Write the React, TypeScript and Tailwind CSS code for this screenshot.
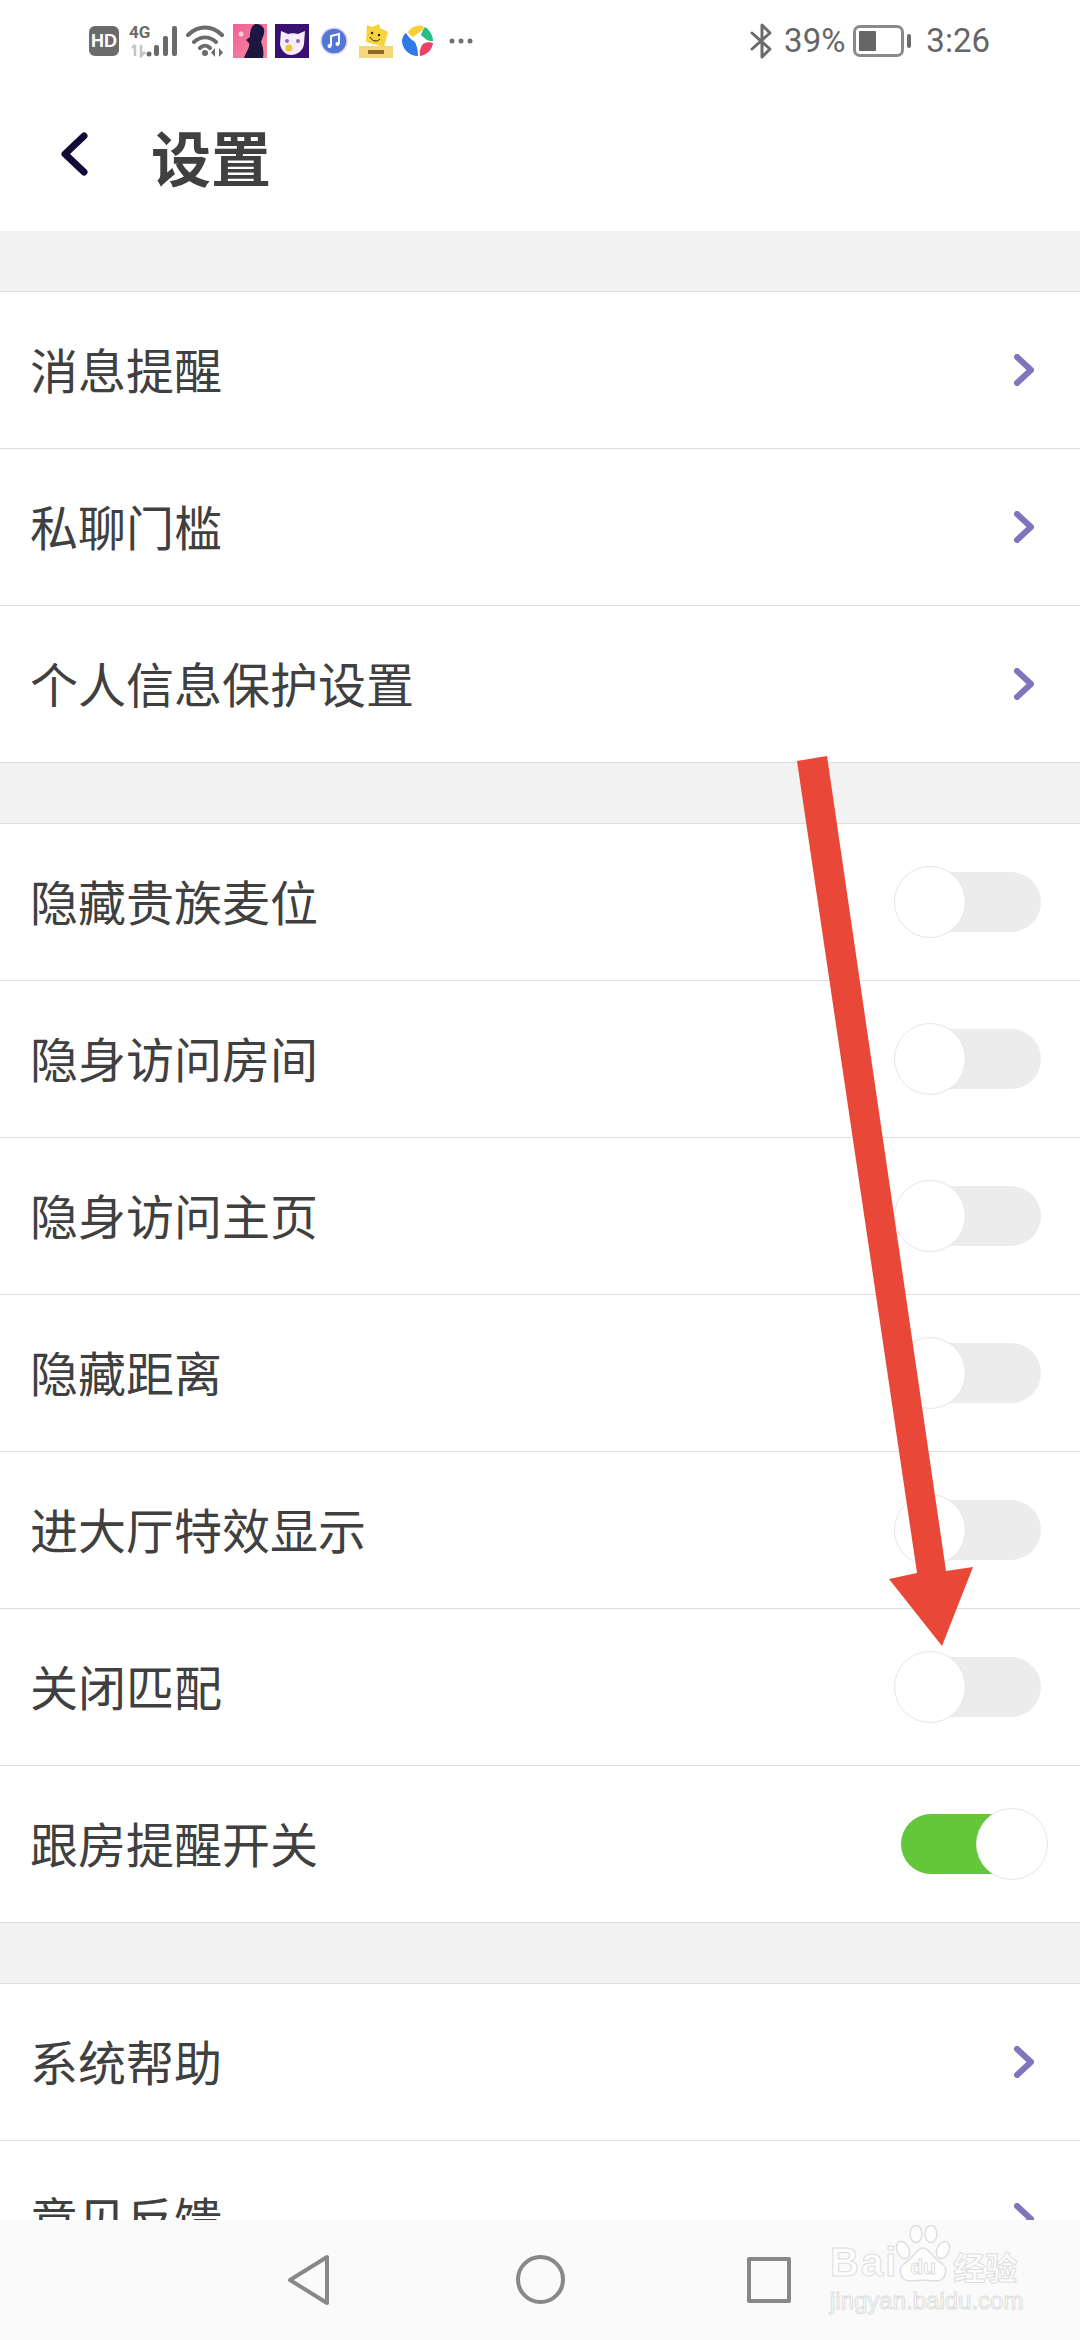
const FONT = "font-['Noto_Sans_CJK_SC','Noto_Sans',sans-serif]";

const Chevron = () => (
  <svg width="24" height="32" viewBox="0 0 24 32" className="mr-[4px]">
    <path d="M4 3 L18 16 L4 29" fill="none" stroke="#8273bd" strokeWidth="6" strokeLinecap="round" strokeLinejoin="round" />
  </svg>
);

const Toggle = ({ on = false }: { on?: boolean }) => (
  <div className={`relative w-[140px] h-[60px] rounded-full ${on ? 'bg-[#63c739]' : 'bg-[#ececec]'}`}>
    <div
      className={`absolute top-[-6px] w-[72px] h-[72px] rounded-full bg-white border border-[#e6e6e6] ${
        on ? 'right-[-7px]' : 'left-[-7px]'
      }`}
    />
  </div>
);

const Row = ({ label, toggle, on }: { label: string; toggle?: boolean; on?: boolean }) => (
  <div className="h-[157px] shrink-0 flex items-center justify-between bg-white border-b border-[#dedede] pl-[30px] pr-[39px]">
    <span className="text-[48px] leading-none pb-[4px] text-[#404040]">{label}</span>
    {toggle ? <Toggle on={on} /> : <Chevron />}
  </div>
);

const Gap = () => <div className="h-[61px] shrink-0 bg-[#f2f2f2] border-b border-[#dedede]" />;

const StatusBar = () => (
  <div className="h-[70px] shrink-0 relative flex items-center pl-[89px] pr-[90px] pt-[11px] text-[#666]">
    {/* HD */}
    <div className="w-[30px] h-[30px] rounded-[6px] bg-[#6b6b6b] text-white text-[18px] font-bold leading-none flex items-center justify-center font-['Liberation_Sans',sans-serif]">
      HD
    </div>
    {/* 4G + signal */}
    <svg width="52" height="34" viewBox="0 0 52 34" className="ml-[10px]">
      <text x="0" y="14" fontSize="17" fontWeight="700" fill="#6b6b6b" fontFamily="Roboto, sans-serif">4G</text>
      <path d="M6 21v11M3 24l3-3M12 21v11l4-4" stroke="#c4c4c4" strokeWidth="2.5" fill="none" />
      <circle cx="20" cy="30" r="2.5" fill="#6b6b6b" />
      <rect x="25" y="21" width="5" height="11" rx="2" fill="#6b6b6b" />
      <rect x="34" y="12" width="5" height="20" rx="2" fill="#6b6b6b" />
      <rect x="43" y="2" width="5" height="30" rx="2" fill="#6b6b6b" />
    </svg>
    {/* wifi */}
    <svg width="40" height="34" viewBox="0 0 40 34" className="ml-[5px]">
      <path d="M2 11 C12 1 26 1 36 11 M8 18 C15 12 23 12 30 18 M14 24 C17 21 21 21 24 24" fill="none" stroke="#6b6b6b" strokeWidth="4" strokeLinecap="round" />
      <circle cx="19" cy="29" r="3" fill="#6b6b6b" />
      <path d="M29 24v9l-4-4.5zM33 24v9l4-4.5z" fill="#6b6b6b" />
    </svg>
    {/* app icons */}
    <svg width="34" height="34" viewBox="0 0 34 34" className="ml-[7px]">
      <defs>
        <linearGradient id="pinkBg" x1="0" y1="0" x2="1" y2="1">
          <stop offset="0" stopColor="#f0609a" />
          <stop offset="1" stopColor="#f78b9b" />
        </linearGradient>
      </defs>
      <rect width="34" height="34" fill="url(#pinkBg)" />
      <path d="M22 0 C17 3 17 9 17 13 L13 16 L16 19 C17 24 13 28 11 34 L30 34 C31 28 30 22 28 18 C30 12 33 8 30 3 C28 1 26 0 24 0 Z" fill="#1d1640" />
      <circle cx="8" cy="10" r="2.5" fill="#fbd0dc" />
    </svg>
    <svg width="34" height="34" viewBox="0 0 34 34" className="ml-[8px]">
      <rect width="34" height="34" fill="#3a1070" />
      <path d="M6 7 L13 10 C16 9 20 9 23 10 L30 7 L29 20 C28 27 22 31 16 31 C10 31 6 26 5 20 Z" fill="#f5eef8" />
      <circle cx="12" cy="17" r="2" fill="#9a60c8" />
      <circle cx="23" cy="17" r="2" fill="#9a60c8" />
      <circle cx="14" cy="24" r="3.5" fill="#f2c23c" />
    </svg>
    <svg width="28" height="28" viewBox="0 0 28 28" className="ml-[11px]">
      <circle cx="14" cy="14" r="13" fill="#5277d6" stroke="#e0d6f5" strokeWidth="1.5" />
      <path d="M11 19V9l8-2v10" fill="none" stroke="#fff" strokeWidth="2" />
      <circle cx="9.5" cy="19" r="2" fill="#fff" />
      <circle cx="17.5" cy="17" r="2" fill="#fff" />
    </svg>
    <svg width="34" height="34" viewBox="0 0 34 34" className="ml-[11px]">
      <path d="M8 1 L13 3 L20 0 L21 4 L29 8 L25 23 L7 18 Z" fill="#f8d33c" />
      <circle cx="13" cy="9" r="1.2" fill="#222" />
      <circle cx="20" cy="11" r="1.2" fill="#222" />
      <path d="M11 13 C14 18 18 18 21 15" fill="none" stroke="#222" strokeWidth="1" />
      <rect x="0" y="22" width="34" height="12" fill="#f4d57a" />
      <rect x="9" y="26" width="16" height="4" fill="#8a6a28" />
    </svg>
    <svg width="33" height="33" viewBox="0 0 33 33" className="ml-[8px]">
      <path d="M7 8 C11 2 19 0 23 3 C21 8 15 10 12 13 C10 12 8 10 7 8 Z" fill="#f8cf30" />
      <path d="M24 3 C29 6 32 12 32 17 C27 18 23 14 20 11 C21 8 22 5 24 3 Z" fill="#28bd85" />
      <path d="M32 19 C31 26 26 31 19 32 C18 27 20 22 22 20 C25 18 29 18 32 19 Z" fill="#ee3f64" />
      <path d="M17 32 C9 32 2 26 1 18 C1 14 3 10 5 9 C8 14 11 16 14 18 C16 22 17 27 17 32 Z" fill="#2f7ae8" />
    </svg>
    <svg width="26" height="6" viewBox="0 0 26 6" className="ml-[15px]">
      <circle cx="3" cy="3" r="2.5" fill="#707070" />
      <circle cx="12" cy="3" r="2.5" fill="#707070" />
      <circle cx="21" cy="3" r="2.5" fill="#707070" />
    </svg>

    <div className="ml-auto flex items-center">
      <svg width="24" height="36" viewBox="0 0 24 36">
        <path d="M2 10 L20 26 L12 34 V2 L20 10 L2 26" fill="none" stroke="#6b6b6b" strokeWidth="3" strokeLinejoin="round" strokeLinecap="round" />
      </svg>
      <span className="ml-[10px] text-[33px] leading-none font-['Roboto',sans-serif]">39%</span>
      <div className="ml-[8px] w-[51px] h-[32px] rounded-[7px] border-[3px] border-[#8a8a8a] p-[3px]">
        <div className="w-[17px] h-full rounded-[1px] bg-[#666]" />
      </div>
      <div className="ml-[3px] w-[4px] h-[14px] rounded-[2px] bg-[#6b6b6b]" />
      <span className="ml-[15px] text-[33px] leading-none font-['Roboto',sans-serif]">3:26</span>
    </div>
  </div>
);

const NavBar = () => (
  <div className="absolute bottom-0 left-0 right-0 h-[120px] bg-[#fafafa] flex items-center">
    <svg width="60" height="60" viewBox="0 0 60 60" className="absolute left-[279px] top-[30px]">
      <path d="M48 7 V53 L11 30 Z" fill="none" stroke="#888" strokeWidth="4" strokeLinejoin="round" />
    </svg>
    <div className="absolute left-[516px] top-[35px] w-[49px] h-[49px] rounded-full border-[4px] border-[#888]" />
    <div className="absolute left-[747px] top-[37px] w-[44px] h-[46px] rounded-[2px] border-[4px] border-[#888]" />
    {/* watermark */}
    <div className="absolute left-[830px] top-[5px] w-[195px]">
      <div className="flex items-end h-[58px] text-[#fdfdfd] [-webkit-text-stroke:1px_#dedede]">
        <span className="text-[40px] font-bold leading-none tracking-[2px] pb-[1px] font-['Liberation_Sans',sans-serif]">Bai</span>
        <svg width="60" height="58" viewBox="0 0 60 58" className="-ml-[5px] shrink-0">
          <g fill="#fdfdfd" stroke="#dedede" strokeWidth="1.5">
            <ellipse cx="10" cy="25" rx="6" ry="9" transform="rotate(-25 10 25)" />
            <ellipse cx="23" cy="9" rx="6" ry="8.5" />
            <ellipse cx="38" cy="9" rx="6" ry="8.5" />
            <ellipse cx="50" cy="25" rx="6" ry="9" transform="rotate(25 50 25)" />
            <path d="M30 23 C23 23 22 32 12 38 C3 44 8 57 18 56 C26 55 34 55 42 56 C52 57 57 44 48 38 C38 32 37 23 30 23 Z" />
          </g>
          <text x="30" y="49" textAnchor="middle" fontSize="21" fontWeight="700" fill="#fdfdfd" stroke="#dedede" strokeWidth="1" fontFamily="Liberation Sans, sans-serif">du</text>
        </svg>
        <span className="text-[32px] font-bold leading-none pb-[1px]">经验</span>
      </div>
      <div className="text-[24px] leading-none text-[#fdfdfd] [-webkit-text-stroke:1px_#dedede] font-['Liberation_Sans',sans-serif] mt-[6px]">
        jingyan.baidu.com
      </div>
    </div>
  </div>
);

export default function App() {
  return (
    <div className={`relative w-[1080px] h-[2340px] overflow-hidden bg-white flex flex-col ${FONT}`}>
      <StatusBar />
      {/* header */}
      <div className="h-[161px] shrink-0 flex items-center pl-[58px] pt-[6px]">
        <svg width="36" height="48" viewBox="0 0 36 48">
          <path d="M26 6 L7 24 L26 42" fill="none" stroke="#140a38" strokeWidth="7" strokeLinecap="round" strokeLinejoin="round" />
        </svg>
        <span className="ml-[57px] text-[60px] leading-none font-bold text-[#404040] translate-y-[2px]">设置</span>
      </div>
      <Gap />
      <Row label="消息提醒" />
      <Row label="私聊门槛" />
      <Row label="个人信息保护设置" />
      <Gap />
      <Row label="隐藏贵族麦位" toggle />
      <Row label="隐身访问房间" toggle />
      <Row label="隐身访问主页" toggle />
      <Row label="隐藏距离" toggle />
      <Row label="进大厅特效显示" toggle />
      <Row label="关闭匹配" toggle />
      <Row label="跟房提醒开关" toggle on />
      <Gap />
      <Row label="系统帮助" />
      <Row label="意见反馈" />
      <NavBar />
      {/* red annotation arrow drawn over the screenshot */}
      <svg width="1080" height="2340" viewBox="0 0 1080 2340" className="absolute inset-0 pointer-events-none">
        <path d="M797 761 L827 756 L946 1571 L973 1567 L942 1646 L889 1579 L917 1573 Z" fill="#e94738" />
      </svg>
    </div>
  );
}
